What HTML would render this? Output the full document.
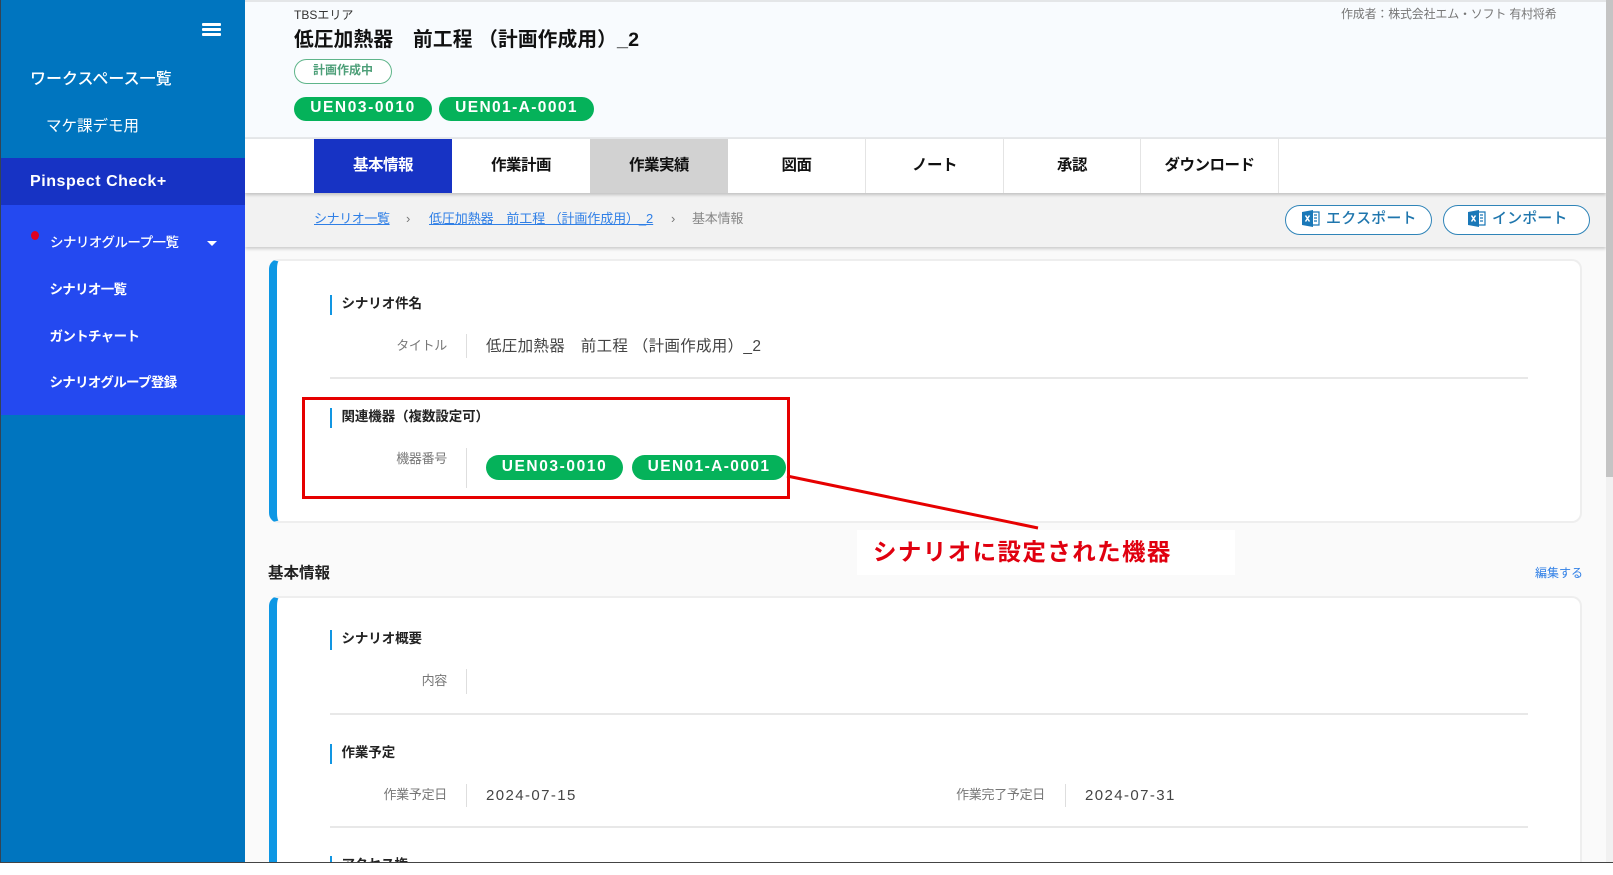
<!DOCTYPE html>
<html lang="ja"><head><meta charset="utf-8"><title>基本情報</title>
<style>
html,body{margin:0;padding:0;background:#fff}
#p{position:relative;width:1613px;height:875px;overflow:hidden;background:#fff;font-family:"Liberation Sans","Noto Sans CJK JP",sans-serif;color:#222}
#p div,#p a,#p span.t{position:absolute;white-space:pre;box-sizing:border-box}
.t{line-height:20px;height:20px}
.side{color:#fff}
.tab{top:139px;height:54px;width:138px;background:#fff;border-right:1px solid #e4e4e4;text-align:center;line-height:54px;font-size:15.5px;font-weight:700;color:#111;letter-spacing:-.5px}
.tag{background:#05b25a;color:#fff;border-radius:13px;font-weight:700;font-size:15.5px;letter-spacing:1.6px;text-align:center}
.bar{left:330px;width:2px;background:#1296e2;height:20px}
.h{left:341.5px;font-size:13.5px;font-weight:700;color:#222;letter-spacing:-.1px}
.lb{font-size:13px;color:#777;text-align:right;letter-spacing:-.3px}
.sep{width:1px;background:#dedede}
.v{font-size:15.5px;color:#444}
.ln{left:330px;width:1198px;height:2px;background:#e8e8e8}
.card{left:269px;width:1313px;background:#fff;border:2px solid #eee;border-left:8px solid #0d97e4;border-radius:10px}
.btn{top:205px;width:147px;height:30px;border:1.5px solid #2f84b8;border-radius:15px;background:#fff}
</style></head><body><div id="p">
<div style="left:245px;top:0;width:1368px;height:862px;background:#fafafa"></div>

<!-- header -->
<div style="left:245px;top:0;width:1361px;height:139px;background:#f8fbfe;border-bottom:2px solid #e6e8ea;border-top:2px solid #e4e6e8"></div>
<div class="t" style="left:294px;top:5px;font-size:12px;color:#333">TBSエリア</div>
<div class="t" style="left:294px;top:29px;font-size:19.7px;line-height:22px;height:22px;font-weight:700;color:#111;letter-spacing:.15px">低圧加熱器　前工程 （計画作成用）_2</div>
<div style="left:294px;top:59px;width:98px;height:25px;border:1px solid #5fb58a;border-radius:13px;background:#fff;text-align:center;font-size:12px;font-weight:700;color:#4d9f78;line-height:21px">計画作成中</div>
<div class="tag" style="left:294px;top:97px;width:138px;height:24px;line-height:22px">UEN03-0010</div>
<div class="tag" style="left:439px;top:97px;width:155px;height:24px;line-height:22px;letter-spacing:1.4px">UEN01-A-0001</div>
<div class="t" style="left:1341px;top:4px;font-size:12px;color:#777;letter-spacing:-.2px">作成者：株式会社エム・ソフト 有村将希</div>

<!-- breadcrumb -->
<div style="left:245px;top:193px;width:1361px;height:54px;background:#f2f2f2;box-shadow:0 2px 3px rgba(0,0,0,.18)"></div>

<!-- tabs -->
<div style="left:245px;top:139px;width:1361px;height:54px;background:#fff;box-shadow:0 2px 3px rgba(0,0,0,.2)"></div>
<div class="tab" style="left:314px;background:#1733c4;color:#fff;border:0">基本情報</div>
<div class="tab" style="left:452px;border:0">作業計画</div>
<div class="tab" style="left:590px;background:#d2d2d2;border:0">作業実績</div>
<div class="tab" style="left:728px">図面</div>
<div class="tab" style="left:866px">ノート</div>
<div class="tab" style="left:1004px;width:137px">承認</div>
<div class="tab" style="left:1141px">ダウンロード</div>

<div class="t" style="left:314px;top:209px;font-size:13px;color:#2f7fe6;text-decoration:underline;letter-spacing:-.4px">シナリオ一覧</div>
<div class="t" style="left:406px;top:209px;font-size:13px;color:#777">›</div>
<div class="t" style="left:429px;top:209px;font-size:13px;color:#2f7fe6;text-decoration:underline;letter-spacing:-.1px">低圧加熱器　前工程 （計画作成用）_2</div>
<div class="t" style="left:671px;top:209px;font-size:13px;color:#777">›</div>
<div class="t" style="left:692px;top:209px;font-size:13px;color:#888;letter-spacing:-.2px">基本情報</div>

<div class="btn" style="left:1285px"></div>
<div class="btn" style="left:1443px"></div>
<svg style="position:absolute;left:1302px;top:210px" width="18" height="17" viewBox="0 0 18 17"><path d="M10 2h7v13h-7z" fill="#fff" stroke="#1a78b8" stroke-width="1.2"/><path d="M12 5h3M12 8h3M12 11h3" stroke="#1a78b8" stroke-width="1.2"/><path d="M0 2l11-2v17L0 15z" fill="#1a78b8"/><path d="M3.5 5.5l4 6M7.5 5.5l-4 6" stroke="#fff" stroke-width="1.5"/></svg>
<svg style="position:absolute;left:1468px;top:210px" width="18" height="17" viewBox="0 0 18 17"><path d="M10 2h7v13h-7z" fill="#fff" stroke="#1a78b8" stroke-width="1.2"/><path d="M12 5h3M12 8h3M12 11h3" stroke="#1a78b8" stroke-width="1.2"/><path d="M0 2l11-2v17L0 15z" fill="#1a78b8"/><path d="M3.5 5.5l4 6M7.5 5.5l-4 6" stroke="#fff" stroke-width="1.5"/></svg>
<div class="t" style="left:1326px;top:209px;font-size:15px;font-weight:500;color:#1f76ad;letter-spacing:.2px">エクスポート</div>
<div class="t" style="left:1492px;top:209px;font-size:15px;font-weight:500;color:#1f76ad;letter-spacing:.1px">インポート</div>

<!-- card 1 -->
<div class="card" style="top:259px;height:264px"></div>
<div class="bar" style="top:295px"></div>
<div class="t h" style="top:294px">シナリオ件名</div>
<div class="t lb" style="left:347px;width:100px;top:336px">タイトル</div>
<div class="sep" style="left:466px;top:334px;height:24px"></div>
<div class="t v" style="left:486px;top:337px;letter-spacing:.3px">低圧加熱器　前工程 （計画作成用）_2</div>
<div class="ln" style="top:377px"></div>
<div class="bar" style="top:408px"></div>
<div class="t h" style="top:407px">関連機器（複数設定可）</div>
<div class="t lb" style="left:347px;width:100px;top:449px">機器番号</div>
<div class="sep" style="left:466px;top:448px;height:40px"></div>
<div class="tag" style="left:486px;top:455px;width:137px;height:25px;line-height:24px">UEN03-0010</div>
<div class="tag" style="left:632px;top:455px;width:154px;height:25px;line-height:24px;letter-spacing:1.4px">UEN01-A-0001</div>

<!-- section -->
<div class="t" style="left:268px;top:564px;font-size:15.5px;font-weight:700;color:#222">基本情報</div>
<div class="t" style="left:1535px;top:563px;font-size:12px;color:#2f7fe6">編集する</div>

<!-- card 2 -->
<div class="card" style="top:596px;height:300px"></div>
<div class="bar" style="top:630px"></div>
<div class="t h" style="top:629px">シナリオ概要</div>
<div class="t lb" style="left:347px;width:100px;top:671px">内容</div>
<div class="sep" style="left:466px;top:669px;height:25px"></div>
<div class="ln" style="top:713px"></div>
<div class="bar" style="top:744px"></div>
<div class="t h" style="top:743px">作業予定</div>
<div class="t lb" style="left:347px;width:100px;top:785px">作業予定日</div>
<div class="sep" style="left:466px;top:784px;height:23px"></div>
<div class="t v" style="left:486px;top:786px;font-size:15px;letter-spacing:1.4px">2024-07-15</div>
<div class="t lb" style="left:925px;width:120px;top:785px">作業完了予定日</div>
<div class="sep" style="left:1065px;top:784px;height:23px"></div>
<div class="t v" style="left:1085px;top:786px;font-size:15px;letter-spacing:1.4px">2024-07-31</div>
<div class="ln" style="top:826px"></div>
<div class="bar" style="top:856px"></div>
<div class="t h" style="top:855px">アクセス権</div>

<!-- scrollbar -->
<div style="left:1606px;top:0;width:7px;height:862px;background:#f1f1f1"></div>
<div style="left:1606px;top:0;width:7px;height:477px;background:#c4c4c4"></div>

<!-- bottom cut -->
<div style="left:0;top:862px;width:1613px;height:13px;background:#fff;border-top:1px solid #444"></div>

<!-- sidebar -->
<div style="left:0;top:0;width:245px;height:862px;background:#0075bf;border-left:1px solid #345"></div>
<div style="left:1px;top:158px;width:244px;height:47px;background:#1733c4"></div>
<div style="left:1px;top:205px;width:244px;height:210px;background:#2449f0"></div>
<div style="left:202px;top:23px;width:19px;height:3px;background:#fff;border-radius:1px"></div>
<div style="left:202px;top:28px;width:19px;height:3px;background:#fff;border-radius:1px"></div>
<div style="left:202px;top:33px;width:19px;height:3px;background:#fff;border-radius:1px"></div>
<div class="t side" style="left:30px;top:70px;font-size:16px;font-weight:500">ワークスペース一覧</div>
<div class="t side" style="left:46px;top:116.5px;font-size:15.5px">マケ課デモ用</div>
<div class="t side" style="left:30px;top:172px;font-size:16px;font-weight:700;letter-spacing:.55px">Pinspect Check+</div>
<div style="left:31px;top:231px;width:8px;height:9px;border-radius:50%;background:#e00020"></div>
<div class="t side" style="left:50px;top:233px;font-size:13.5px;font-weight:500;letter-spacing:-.55px">シナリオグループ一覧</div>
<div style="left:207px;top:241px;width:0;height:0;border-left:5px solid transparent;border-right:5px solid transparent;border-top:5px solid #fff"></div>
<div class="t side" style="left:49.5px;top:280px;font-size:13.5px;font-weight:700;letter-spacing:-.7px">シナリオ一覧</div>
<div class="t side" style="left:49.5px;top:327px;font-size:13.5px;font-weight:700;letter-spacing:-.65px">ガントチャート</div>
<div class="t side" style="left:49.5px;top:373px;font-size:13.5px;font-weight:700;letter-spacing:-.7px">シナリオグループ登録</div>

<!-- annotation -->
<div style="left:302px;top:397px;width:488px;height:102px;border:3px solid #e60000"></div>
<svg style="position:absolute;left:0;top:0" width="1613" height="875"><line x1="787" y1="476" x2="1038" y2="528" stroke="#e60000" stroke-width="3"/></svg>
<div style="left:857px;top:530px;width:378px;height:45px;background:#fff"></div>
<div class="t" style="left:873px;top:537.5px;height:28px;line-height:28px;font-size:23.5px;font-weight:700;color:#e0000f;letter-spacing:1.4px">シナリオに設定された機器</div>
</div></body></html>
